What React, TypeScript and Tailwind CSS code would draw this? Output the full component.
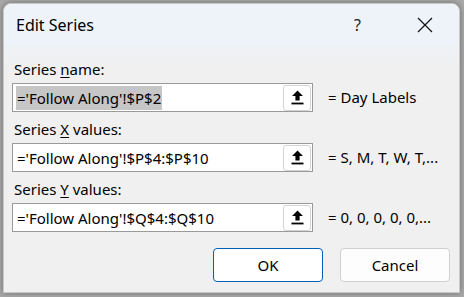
import React from "react";

const font = { fontFamily: '"Segoe UI", "Noto Sans", "Liberation Sans", sans-serif' };

function UploadIcon() {
  return (
    <svg width="13" height="15" viewBox="0 0 13 15">
      <path d="M6.5 0.5 L12 6 L8.6 6 L8.6 10.5 L4.4 10.5 L4.4 6 L1 6 Z" fill="#000" />
      <rect x="0.5" y="12.6" width="12" height="1.8" fill="#000" />
    </svg>
  );
}

function Field({ value, selected, result }: { value: string; selected?: boolean; result: string }) {
  return (
    <div className="flex items-center">
      <div className="flex h-[29px] w-[301px] items-center border border-[#9a9a9a] bg-white pl-[3px] pr-[1px]">
        <div className="flex-1 text-[15px] leading-[24px] text-black">
          <span className={selected ? "bg-[#c6c6c6] px-[1px] py-[2px]" : "px-[1px]"}>{value}</span>
        </div>
        <div className="flex h-[26px] w-[28px] items-center justify-center rounded-[3px] border border-[#d4d4d4] bg-white">
          <UploadIcon />
        </div>
      </div>
      <div className="ml-[15px] text-[15px] text-black">{result}</div>
    </div>
  );
}

function Label({ children }: { children: React.ReactNode }) {
  return <div className="h-[23px] pl-[2px] text-[15px] leading-[18px] text-black">{children}</div>;
}

export default function App() {
  return (
    <div className="h-[297px] w-[464px] overflow-hidden bg-[#a9a9a9] pl-[3px] pt-[3px]" style={font}>
      <div className="flex h-[290px] w-[457px] flex-col overflow-hidden rounded-t-[8px] border border-[#c9c9c9] bg-[#f0f0f0] shadow-[0_0_6px_rgba(0,0,0,0.35)]">
        <div className="flex h-[41px] items-center bg-[#eef3f9] pl-[12px]">
          <div className="flex-1 text-[16px] text-black">Edit Series</div>
          <div className="mr-[56px] text-[16px] text-[#222]">?</div>
          <svg width="16" height="16" viewBox="0 0 16 16" className="mr-[26px]">
            <path d="M1 1 L15 15 M15 1 L1 15" stroke="#111" strokeWidth="1.2" />
          </svg>
        </div>
        <div className="flex flex-1 flex-col bg-gradient-to-b from-[#eef1f5] to-[#f0f0f0] to-[20px] pl-[8px] pt-[15px]">
          <Label>
            Series <span className="underline underline-offset-2">n</span>ame:
          </Label>
          <Field value="='Follow Along'!$P$2" selected result="= Day Labels" />
          <div className="h-[8px]" />
          <Label>
            Series <span className="underline underline-offset-2">X</span> values:
          </Label>
          <Field value="='Follow Along'!$P$4:$P$10" result="= S, M, T, W, T,..." />
          <div className="h-[8px]" />
          <Label>
            Series <span className="underline underline-offset-2">Y</span> values:
          </Label>
          <Field value="='Follow Along'!$Q$4:$Q$10" result="= 0, 0, 0, 0, 0,..." />
          <div className="mt-[16px] flex gap-[17px] pl-[201px]">
            <div className="flex h-[34px] w-[110px] items-center justify-center rounded-[4px] border border-[#005fb8] bg-white text-[15px] text-black">
              OK
            </div>
            <div className="flex h-[34px] w-[110px] items-center justify-center rounded-[4px] border border-[#d0d0d0] bg-[#fdfdfd] text-[15px] text-black">
              Cancel
            </div>
          </div>
        </div>
      </div>
    </div>
  );
}
